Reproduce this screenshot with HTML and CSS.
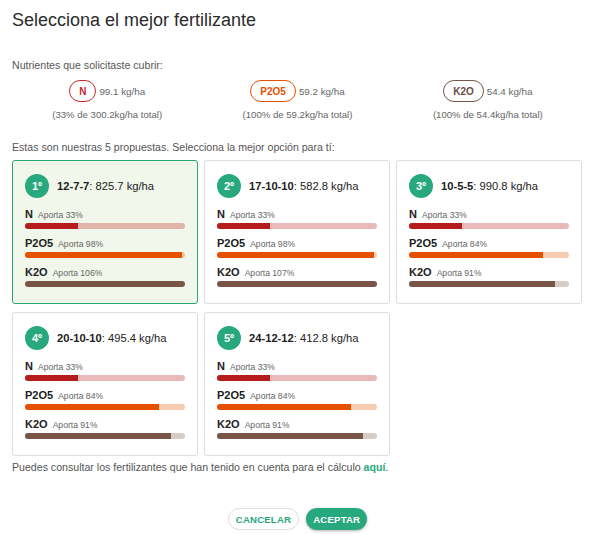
FILE: index.html
```html
<!DOCTYPE html>
<html lang="es">
<head>
<meta charset="utf-8">
<link rel="stylesheet" href="styles.css">
</head>
<body>
<div class="dialog">
  <h1 class="title">Selecciona el mejor fertilizante</h1>
  <p class="label">Nutrientes que solicitaste cubrir:</p>
  <div class="nutrients">
    <div class="nutrient">
      <div class="chip-row"><span class="chip chip-n">N</span><span class="amount">99.1 kg/ha</span></div>
      <div class="sub">(33% de 300.2kg/ha total)</div>
    </div>
    <div class="nutrient">
      <div class="chip-row"><span class="chip chip-p">P2O5</span><span class="amount">59.2 kg/ha</span></div>
      <div class="sub">(100% de 59.2kg/ha total)</div>
    </div>
    <div class="nutrient">
      <div class="chip-row"><span class="chip chip-k">K2O</span><span class="amount">54.4 kg/ha</span></div>
      <div class="sub">(100% de 54.4kg/ha total)</div>
    </div>
  </div>
  <p class="label label-props">Estas son nuestras 5 propuestas. Selecciona la mejor opción para tí:</p>
  <div class="cards">
    <div class="card selected">
      <div class="card-head"><span class="rank">1º</span><span class="name"><b>12-7-7</b>: 825.7 kg/ha</span></div>
      <div class="nut"><div class="nut-label"><b>N</b><span>Aporta 33%</span></div><div class="bar bar-n"><div class="fill" style="width:33%"></div></div></div>
      <div class="nut"><div class="nut-label"><b>P2O5</b><span>Aporta 98%</span></div><div class="bar bar-p"><div class="fill" style="width:98%"></div></div></div>
      <div class="nut"><div class="nut-label"><b>K2O</b><span>Aporta 106%</span></div><div class="bar bar-k"><div class="fill" style="width:100%"></div></div></div>
    </div>
    <div class="card">
      <div class="card-head"><span class="rank">2º</span><span class="name"><b>17-10-10</b>: 582.8 kg/ha</span></div>
      <div class="nut"><div class="nut-label"><b>N</b><span>Aporta 33%</span></div><div class="bar bar-n"><div class="fill" style="width:33%"></div></div></div>
      <div class="nut"><div class="nut-label"><b>P2O5</b><span>Aporta 98%</span></div><div class="bar bar-p"><div class="fill" style="width:98%"></div></div></div>
      <div class="nut"><div class="nut-label"><b>K2O</b><span>Aporta 107%</span></div><div class="bar bar-k"><div class="fill" style="width:100%"></div></div></div>
    </div>
    <div class="card">
      <div class="card-head"><span class="rank">3º</span><span class="name"><b>10-5-5</b>: 990.8 kg/ha</span></div>
      <div class="nut"><div class="nut-label"><b>N</b><span>Aporta 33%</span></div><div class="bar bar-n"><div class="fill" style="width:33%"></div></div></div>
      <div class="nut"><div class="nut-label"><b>P2O5</b><span>Aporta 84%</span></div><div class="bar bar-p"><div class="fill" style="width:84%"></div></div></div>
      <div class="nut"><div class="nut-label"><b>K2O</b><span>Aporta 91%</span></div><div class="bar bar-k"><div class="fill" style="width:91%"></div></div></div>
    </div>
    <div class="card">
      <div class="card-head"><span class="rank">4º</span><span class="name"><b>20-10-10</b>: 495.4 kg/ha</span></div>
      <div class="nut"><div class="nut-label"><b>N</b><span>Aporta 33%</span></div><div class="bar bar-n"><div class="fill" style="width:33%"></div></div></div>
      <div class="nut"><div class="nut-label"><b>P2O5</b><span>Aporta 84%</span></div><div class="bar bar-p"><div class="fill" style="width:84%"></div></div></div>
      <div class="nut"><div class="nut-label"><b>K2O</b><span>Aporta 91%</span></div><div class="bar bar-k"><div class="fill" style="width:91%"></div></div></div>
    </div>
    <div class="card">
      <div class="card-head"><span class="rank">5º</span><span class="name"><b>24-12-12</b>: 412.8 kg/ha</span></div>
      <div class="nut"><div class="nut-label"><b>N</b><span>Aporta 33%</span></div><div class="bar bar-n"><div class="fill" style="width:33%"></div></div></div>
      <div class="nut"><div class="nut-label"><b>P2O5</b><span>Aporta 84%</span></div><div class="bar bar-p"><div class="fill" style="width:84%"></div></div></div>
      <div class="nut"><div class="nut-label"><b>K2O</b><span>Aporta 91%</span></div><div class="bar bar-k"><div class="fill" style="width:91%"></div></div></div>
    </div>
  </div>
  <p class="footnote">Puedes consultar los fertilizantes que han tenido en cuenta para el cálculo <a href="#" class="link">aquí</a>.</p>
  <div class="actions">
    <button class="btn btn-cancel">CANCELAR</button>
    <button class="btn btn-ok">ACEPTAR</button>
  </div>
</div>
</body>
</html>
```

FILE: styles.css
```css
* { box-sizing: border-box; }
html, body { margin: 0; padding: 0; background: #fff; }
body {
  font-family: "Liberation Sans", Arial, sans-serif;
  color: #333;
}
.dialog {
  width: 595px;
  height: 534px;
  padding: 8px 12px 0 12px;
}
.title {
  margin: 0;
  font-size: 18px;
  font-weight: normal;
  line-height: 24px;
  color: #2b2b2b;
}
.label {
  margin: 25px 0 0 0;
  font-size: 10.6px;
  line-height: 16px;
  color: #555;
}
.label-props { margin-top: 18px; }
.nutrients {
  display: grid;
  grid-template-columns: repeat(3, 1fr);
  margin-top: 7px;
}
.nutrient {
  display: flex;
  flex-direction: column;
  align-items: center;
}
.chip-row {
  display: flex;
  align-items: center;
  height: 22px;
}
.chip {
  display: inline-flex;
  align-items: center;
  justify-content: center;
  height: 22px;
  padding: 0 9px;
  border: 1px solid;
  border-radius: 11px;
  font-size: 10px;
  font-weight: bold;
}
.chip-n { color: #c62828; border-color: #c62828; }
.chip-p { color: #e65100; border-color: #e65100; }
.chip-k { color: #6d4c41; border-color: #795548; }
.amount {
  margin-left: 3px;
  font-size: 9.8px;
  color: #666;
}
.sub {
  margin-top: 7px;
  font-size: 9.6px;
  line-height: 12px;
  color: #666;
}
.cards {
  display: grid;
  grid-template-columns: repeat(3, 186px);
  gap: 8px 6px;
  margin-top: 5px;
}
.card {
  border: 1px solid #ddd;
  border-radius: 3px;
  padding: 13px 12px 16px 12px;
  background: #fff;
}
.card.selected {
  border-color: #2aa57c;
  background: #f1f7ea;
}
.card-head {
  display: flex;
  align-items: center;
  height: 24px;
  margin-bottom: 8px;
}
.rank {
  width: 24px;
  height: 24px;
  border-radius: 50%;
  background: #27a87e;
  color: #fff;
  font-size: 11px;
  font-weight: bold;
  display: flex;
  align-items: center;
  justify-content: center;
  margin-right: 8px;
}
.name {
  font-size: 11.2px;
  color: #222;
}
.name b { font-weight: bold; }
.nut { margin-top: 6px; }
.nut:first-of-type { margin-top: 0; }
.nut-label {
  display: flex;
  align-items: baseline;
  height: 16px;
  line-height: 16px;
  margin-bottom: 1px;
}
.nut-label b {
  font-size: 11px;
  color: #222;
  margin-right: 5px;
}
.nut-label span {
  font-size: 8.6px;
  color: #666;
}
.bar {
  height: 6px;
  border-radius: 3px;
  overflow: hidden;
}
.fill { height: 100%; }
.bar-n { background: rgba(183, 28, 28, 0.3); }
.bar-n .fill { background: #b71c1c; }
.bar-p { background: rgba(230, 81, 0, 0.3); }
.bar-p .fill { background: #e65100; }
.bar-k { background: rgba(121, 85, 72, 0.3); }
.bar-k .fill { background: #795548; }
.footnote {
  margin: 3px 0 0 0;
  font-size: 10.6px;
  line-height: 16px;
  color: #555;
}
.link {
  color: #27a87e;
  font-weight: bold;
  text-decoration: none;
}
.actions {
  display: flex;
  justify-content: center;
  gap: 7px;
  margin-top: 33px;
}
.btn {
  height: 22px;
  border-radius: 11px;
  font-family: "Liberation Sans", Arial, sans-serif;
  font-size: 9.6px;
  font-weight: bold;
  letter-spacing: 0.2px;
  padding: 0 7px;
  cursor: pointer;
}
.btn-cancel {
  background: #fff;
  color: #27a87e;
  border: 1px solid #ddd;
}
.btn-ok {
  background: #27a87e;
  color: #fff;
  border: none;
  box-shadow: 0 1px 3px rgba(0,0,0,0.3);
}
```
